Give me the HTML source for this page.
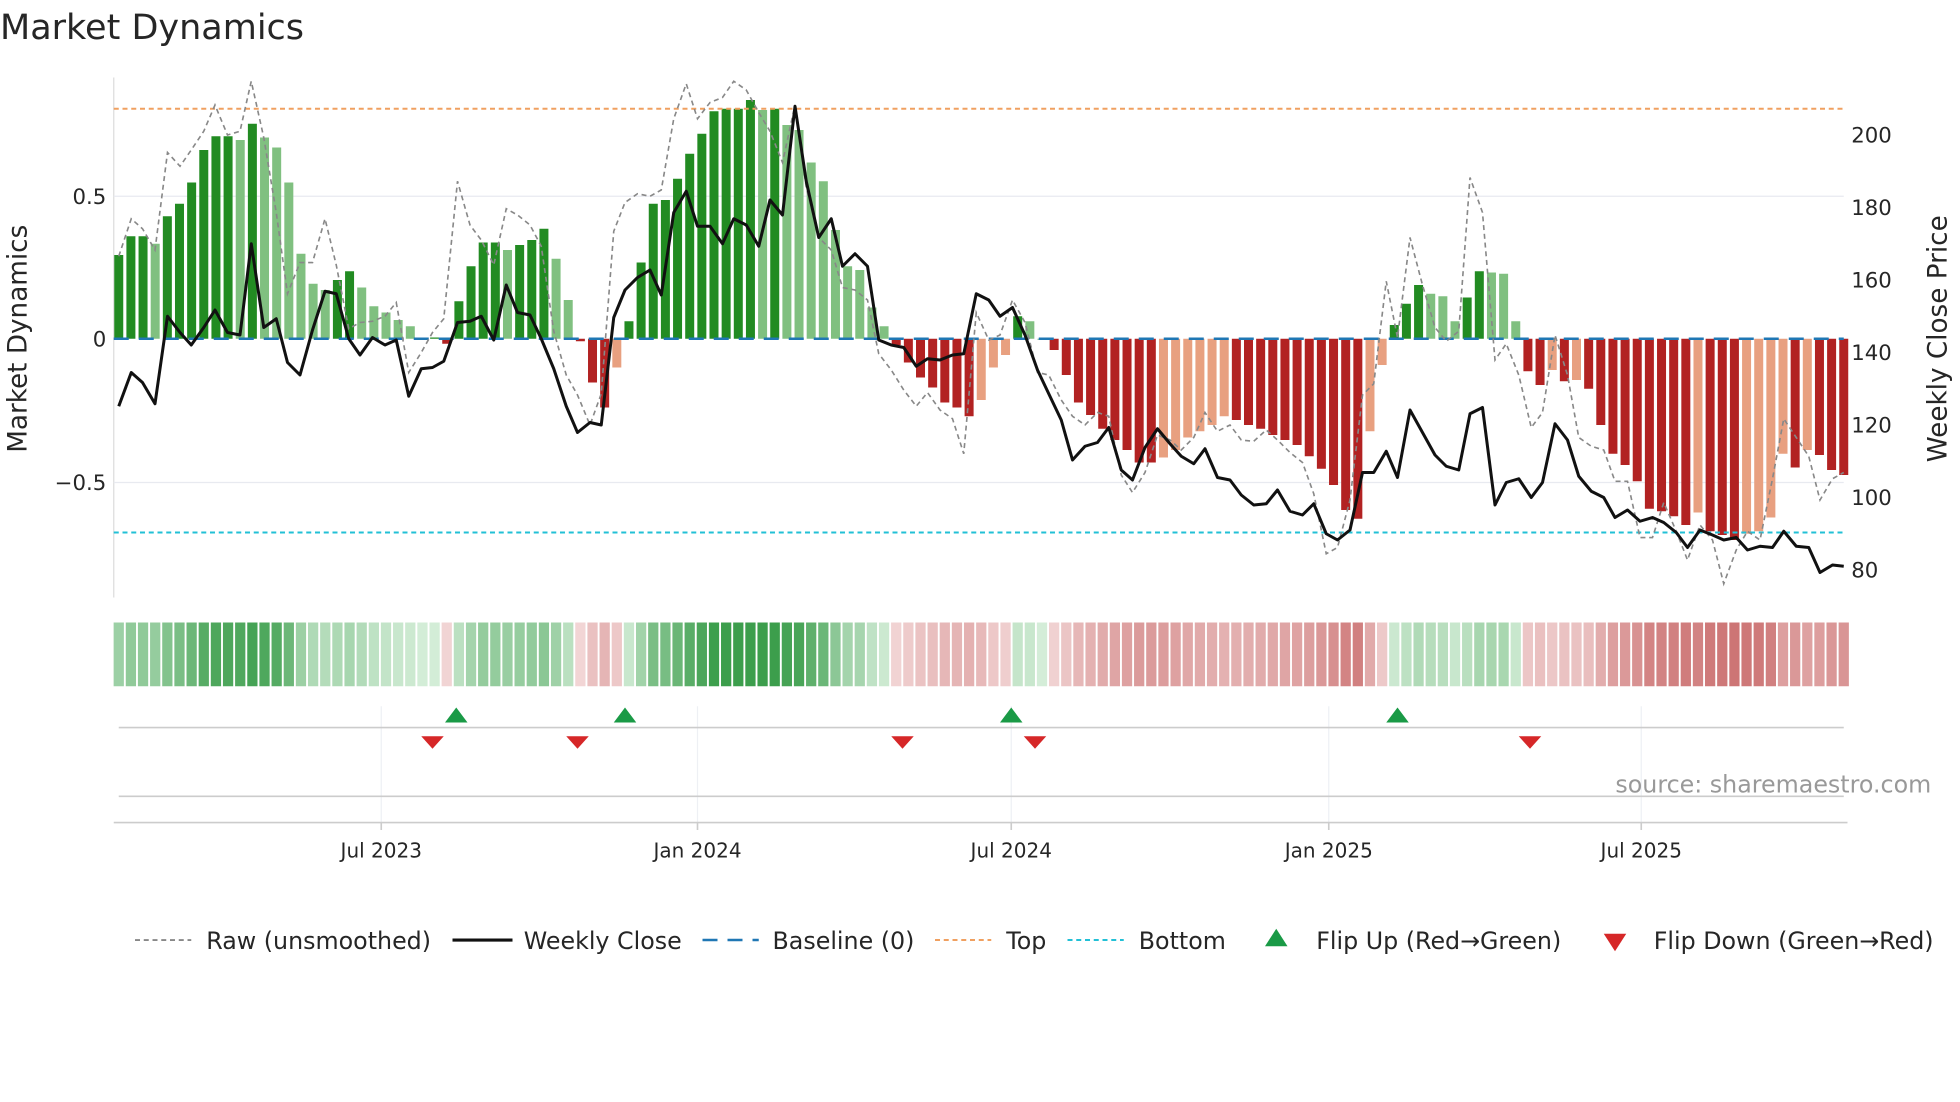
<!DOCTYPE html>
<html><head><meta charset="utf-8"><style>
html,body{margin:0;padding:0;background:#fff;width:1960px;height:1102px;overflow:hidden}
svg{display:block}
text{font-family:"DejaVu Sans","Liberation Sans",sans-serif;fill:#262626}
</style></head><body>
<svg id="s" width="1960" height="1102" viewBox="0 0 1568 881.6" xmlns="http://www.w3.org/2000/svg">
<text x="0" y="31" font-size="28" fill="#333">Market Dynamics</text>
<g id="g"></g>
<line x1="91" y1="62" x2="91" y2="478" stroke="#ddd" stroke-width="1"/>
<line x1="91" y1="157" x2="1475" y2="157" stroke="#e8eaf0" stroke-width="1"/>
<line x1="91" y1="386" x2="1475" y2="386" stroke="#e8eaf0" stroke-width="1"/>
<g id="bars"></g>
<line x1="91" y1="271" x2="1475" y2="271" stroke="#1f77b4" stroke-width="2" stroke-dasharray="12,8"/>
<line x1="91" y1="87" x2="1475" y2="87" stroke="#f0a060" stroke-width="1.6" stroke-dasharray="4,3"/>
<line x1="91" y1="426" x2="1475" y2="426" stroke="#22c0d6" stroke-width="1.6" stroke-dasharray="4,3"/>
<polyline id="raw" fill="none" stroke="#888" stroke-width="1.3" stroke-dasharray="4,3"/>
<polyline id="px" fill="none" stroke="#111" stroke-width="2.4" stroke-linejoin="round"/>
<g font-size="17">
<text x="85" y="163" text-anchor="end">0.5</text>
<text x="85" y="277" text-anchor="end">0</text>
<text x="85" y="392" text-anchor="end">−0.5</text>
<text x="1481" y="114">200</text><text x="1481" y="172">180</text><text x="1481" y="230">160</text>
<text x="1481" y="288">140</text><text x="1481" y="346">120</text><text x="1481" y="404">100</text><text x="1481" y="462">80</text>
</g>
<text transform="translate(21,271) rotate(-90)" font-size="21" text-anchor="middle">Market Dynamics</text>
<text transform="translate(1557,271) rotate(-90)" font-size="21" text-anchor="middle">Weekly Close Price</text>
<g id="heat"></g>
<g id="grid" stroke="#eef0f4" stroke-width="1"></g>
<line x1="95" y1="582" x2="1475" y2="582" stroke="#ccc" stroke-width="1.3"/>
<line x1="95" y1="637" x2="1475" y2="637" stroke="#ccc" stroke-width="1.3"/>
<line x1="91" y1="658" x2="1478" y2="658" stroke="#ccc" stroke-width="1.3"/>
<g id="tri"></g>
<text x="1545" y="634" font-size="19" style="fill:#999" text-anchor="end">source: sharemaestro.com</text>
<g font-size="16" text-anchor="middle" id="dates"></g>
<g font-size="19">
<line x1="108" y1="752" x2="153" y2="752" stroke="#888" stroke-width="1.5" stroke-dasharray="4,3"/>
<text x="165" y="759">Raw (unsmoothed)</text>
<line x1="362" y1="752" x2="410" y2="752" stroke="#111" stroke-width="2.5"/>
<text x="419" y="759">Weekly Close</text>
<line x1="562" y1="752" x2="607" y2="752" stroke="#1f77b4" stroke-width="2" stroke-dasharray="12,8"/>
<text x="618" y="759">Baseline (0)</text>
<line x1="748" y1="752" x2="793" y2="752" stroke="#f0a060" stroke-width="1.6" stroke-dasharray="4,3"/>
<text x="805" y="759">Top</text>
<line x1="854" y1="752" x2="899" y2="752" stroke="#22c0d6" stroke-width="1.6" stroke-dasharray="4,3"/>
<text x="911" y="759">Bottom</text>
<polygon points="1021,743 1030,757 1012,757" fill="#1a9a46"/>
<text x="1053" y="759">Flip Up (Red→Green)</text>
<polygon points="1283,747 1301,747 1292,761" fill="#d62728"/>
<text x="1323" y="759">Flip Down (Green→Red)</text>
</g>
</svg>
<script>
var NS="http://www.w3.org/2000/svg";
function el(p,t,a){var e=document.createElementNS(NS,t);for(var k in a)e.setAttribute(k,a[k]);document.getElementById(p).appendChild(e);return e;}
var tops=[204,189,189,195,173,163,146,120,109,109,112,99,110,118,146,203,227,232,224,217,230,245,250,256,261,270,270,275,241,213,194,194,200,196,192,183,207,240,273,306,326,294,257,210,163,160,143,123,107,89,87,87,80,88,87,100,104,130,145,184,213,216,246,261,276,290,302,310,322,326,333,320,294,284,253,257,271,280,300,322,332,343,352,360,370,370,366,360,350,345,340,333,336,340,343,348,352,356,365,375,388,408,415,345,292,260,243,228,235,237,257,238,217,218,219,257,297,308,296,305,304,311,340,363,372,385,407,409,413,420,410,425,428,432,427,425,414,363,374,360,364,376,380];
var n=tops.length, x0=95, dx=(1475-95)/(n-1);
var vals=tops.map(function(y){return (271-y)/229;});
function mix(c1,c2,t){return "rgb("+c1.map(function(q,j){return Math.round(q+(c2[j]-q)*t)}).join(",")+")";}
for(var i=0;i<n;i++){
 var v=vals[i],p=i?vals[i-1]:0,x=x0+i*dx,c;
 if(v>=0) c=(v>=p)?"#228b22":"#80c080"; else c=(v<=p)?"#b22222":"#e8a080";
 var y=tops[i];
 el("bars","rect",{x:x-3.6,y:Math.min(y,271),width:7.2,height:Math.max(Math.abs(271-y),0.8),fill:c});
 var a=Math.min(Math.abs(v)/0.8,1),col;
 if(v>=0) col=mix([212,237,216],[60,158,76],a); else col=mix([242,214,214],[200,104,104],a);
 el("heat","rect",{x:x-4.8+0.7,y:498,width:8.2,height:51,fill:col});
}
var px=[[95,325],[105,298],[114,306],[124,323],[134,253],[144,266],[153,276],[163,262],[172,248],[182,266],[192,268],[201,195],[211,262],[221,255],[230,290],[240,300],[250,264],[260,233],[269,235],[279,271],[288,284],[298,270],[308,276],[317,272],[327,317],[337,295],[346,294],[355,289],[366,258],[376,257],[385,253],[395,272],[405,228],[414,250],[424,252],[433,271],[443,295],[453,325],[462,346],[472,338],[481,340],[491,254],[500,232],[510,222],[520,216],[529,236],[539,170],[549,153],[558,181],[568,181],[578,195],[587,175],[597,180],[607,197],[616,160],[626,172],[636,85],[645,145],[655,190],[665,175],[674,213],[684,203],[694,213],[703,272],[713,276],[723,278],[733,293],[742,287],[752,288],[762,284],[771,283],[781,235],[791,240],[800,253],[810,246],[820,268],[830,296],[839,315],[849,336],[858,368],[868,357],[878,354],[887,342],[897,376],[906,384],[916,358],[926,343],[936,355],[945,365],[955,371],[964,359],[974,382],[984,384],[993,396],[1003,404],[1013,403],[1022,392],[1032,409],[1042,412],[1051,403],[1061,427],[1070,432],[1080,424],[1090,378],[1099,378],[1109,361],[1118,382],[1128,328],[1138,346],[1148,364],[1157,373],[1167,376],[1176,331],[1186,326],[1196,404],[1205,386],[1215,383],[1225,398],[1234,386],[1244,339],[1254,352],[1263,381],[1273,393],[1283,398],[1292,414],[1302,408],[1312,417],[1322,414],[1331,418],[1341,426],[1350,438],[1360,424],[1370,428],[1379,432],[1389,430],[1398,440],[1408,437],[1418,438],[1427,425],[1437,437],[1447,438],[1456,458],[1466,452],[1475,453]];
var raw=[[95,205],[105,175],[114,183],[124,200],[134,122],[144,133],[153,120],[163,105],[172,84],[182,108],[192,105],[201,65],[211,110],[221,170],[230,235],[240,210],[250,210],[260,175],[269,212],[279,263],[288,258],[298,257],[308,253],[317,242],[327,298],[337,282],[346,266],[355,255],[366,145],[376,180],[385,192],[395,212],[405,167],[414,172],[424,180],[433,197],[443,265],[453,300],[462,316],[472,340],[481,315],[491,185],[500,162],[510,155],[520,157],[529,152],[539,95],[549,67],[558,95],[568,82],[578,78],[587,65],[597,72],[607,90],[616,105],[626,130],[636,84],[645,150],[655,190],[665,200],[674,230],[684,232],[694,240],[703,283],[713,296],[723,312],[733,325],[742,314],[752,328],[762,335],[771,363],[781,250],[791,272],[800,268],[810,240],[820,258],[830,298],[839,300],[849,320],[858,333],[868,340],[878,330],[887,333],[897,380],[906,394],[916,378],[926,348],[936,352],[945,360],[955,350],[964,330],[974,345],[984,340],[993,352],[1003,353],[1013,344],[1022,352],[1032,362],[1042,370],[1051,395],[1061,443],[1070,438],[1080,400],[1090,316],[1099,307],[1109,225],[1118,270],[1128,190],[1138,228],[1148,262],[1157,273],[1167,265],[1176,142],[1186,170],[1196,288],[1205,275],[1215,300],[1225,342],[1234,330],[1244,268],[1254,300],[1263,350],[1273,357],[1283,360],[1292,385],[1302,385],[1312,430],[1322,430],[1331,402],[1341,425],[1350,448],[1360,420],[1370,432],[1379,467],[1389,440],[1398,425],[1408,432],[1418,383],[1427,335],[1437,350],[1447,365],[1456,400],[1466,383],[1475,378]];
document.getElementById("px").setAttribute("points",px.join(" "));
document.getElementById("raw").setAttribute("points",raw.join(" "));
var dl=[[305,"Jul 2023"],[558,"Jan 2024"],[809,"Jul 2024"],[1063,"Jan 2025"],[1313,"Jul 2025"]];
dl.forEach(function(d){
 el("grid","line",{x1:d[0],y1:565,x2:d[0],y2:658});
 el("dates","line",{x1:d[0],y1:658,x2:d[0],y2:664,stroke:"#ccc","stroke-width":1.3});
 var t=el("dates","text",{x:d[0],y:686});t.textContent=d[1];
});
[365,500,809,1118].forEach(function(x){el("tri","polygon",{points:(x)+",566 "+(x+9)+",578 "+(x-9)+",578",fill:"#1a9a46"});});
[346,462,722,828,1224].forEach(function(x){el("tri","polygon",{points:(x-9)+",589 "+(x+9)+",589 "+x+",599",fill:"#d62728"});});
</script>
</body></html>
